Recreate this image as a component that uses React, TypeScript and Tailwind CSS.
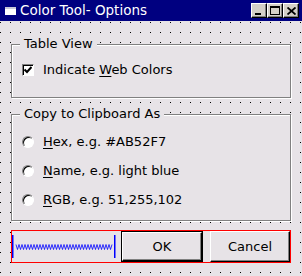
import type { ReactNode } from "react";

const face = "bg-[#e7e3e7]";

function TitleButton({ children }: { children: ReactNode }) {
  return (
    <div className="w-[16px] h-[15px] bg-[#d4d0c8] border-t border-l border-white border-r border-b border-r-black border-b-black shadow-[inset_-1px_-1px_0_#808080] flex items-center justify-center">
      {children}
    </div>
  );
}

function GroupBox({ title, className, children }: { title: string; className: string; children: ReactNode }) {
  return (
    <div
      className={`relative w-[280px] border border-[#808080] shadow-[inset_1px_1px_0_#fff,1px_1px_0_#fff] ${face} ${className}`}
    >
      <span className={`absolute left-[8px] top-[-9px] px-[4px] leading-[15px] ${face}`}>{title}</span>
      {children}
    </div>
  );
}

function Radio({ hot, rest }: { hot: string; rest: string }) {
  return (
    <div className="h-[29px] flex items-center gap-[9px]">
      <div className="w-[12px] h-[12px] rounded-full bg-white border border-t-[#808080] border-l-[#808080] border-r-white border-b-white shadow-[inset_1px_1px_0_#000]" />
      <span>
        <span className="underline underline-offset-2">{hot}</span>
        {rest}
      </span>
    </div>
  );
}

function Spring() {
  const pts: string[] = [];
  for (let i = 0; i <= 64; i++) pts.push(`${4 + i * 1.5},${i % 2 === 0 ? 13.5 : 18.5}`);
  return (
    <svg width="104" height="31" className="shrink-0">
      <rect x="0" y="4" width="1.5" height="23" fill="#0000ff" />
      <rect x="102" y="4" width="1.5" height="23" fill="#0000ff" />
      <polyline points={pts.join(" ")} fill="none" stroke="#0000ff" strokeWidth="0.8" />
    </svg>
  );
}

export default function App() {
  return (
    <div className={`w-[302px] h-[276px] overflow-hidden flex flex-col font-['DejaVu_Sans',sans-serif] text-[13px] text-black ${face}`}>
      <div className="h-[21px] shrink-0 bg-[#000080] flex items-center pl-[5px] pr-[3px]">
        <div className="w-[11px] h-[8px] bg-white border-t-2 border-[#c8c8d8]" />
        <span className="ml-[4px] text-white text-[13.5px] leading-none">Color Tool- Options</span>
        <div className="ml-auto flex">
          <TitleButton>
            <div className="w-[6px] h-[2px] bg-black mt-[7px] mr-[2px]" />
          </TitleButton>
          <TitleButton>
            <div className="w-[10px] h-[9px] border border-black border-t-2" />
          </TitleButton>
          <TitleButton>
            <svg width="9" height="8" viewBox="0 0 9 8">
              <path d="M0.5 0.5 L8.5 7.5 M8.5 0.5 L0.5 7.5" stroke="#000" strokeWidth="1.8" />
            </svg>
          </TitleButton>
        </div>
      </div>

      <div className="relative flex-1">
        <svg className="absolute inset-0 w-full h-full">
          <defs>
            <pattern id="grid" width="10" height="10" y="1" patternUnits="userSpaceOnUse">
              <rect width="1" height="1" fill="#000" />
            </pattern>
          </defs>
          <rect width="100%" height="100%" fill="url(#grid)" />
        </svg>

        <div className="relative flex flex-col pl-[11px] pt-[23px]">
          <GroupBox title="Table View" className="h-[54px] pt-[15px] pl-[10px]">
            <div className="h-[20px] flex items-center gap-[9px]">
              <div className="w-[12px] h-[12px] bg-white border border-t-[#808080] border-l-[#808080] border-r-white border-b-white shadow-[inset_1px_1px_0_#000] flex items-center justify-center">
                <svg width="8" height="8" viewBox="0 0 8 8">
                  <polyline points="0.5,3.5 3,6 7.5,1" fill="none" stroke="#000" strokeWidth="2" />
                </svg>
              </div>
              <span>
                Indicate <span className="underline underline-offset-2">W</span>eb Colors
              </span>
            </div>
          </GroupBox>

          <GroupBox title="Copy to Clipboard As" className="mt-[16px] h-[107px] pt-[12px] pl-[10px]">
            <Radio hot="H" rest="ex, e.g. #AB52F7" />
            <Radio hot="N" rest="ame, e.g. light blue" />
            <Radio hot="R" rest="GB, e.g. 51,255,102" />
          </GroupBox>

          <div className={`mt-[9px] w-[280px] h-[33px] border border-[#ff0000] flex ${face}`}>
            <Spring />
            <div className="ml-[5px] w-[82px] h-[31px] border border-black">
              <div className="w-full h-full bg-[#e7e3e7] border-t border-l border-white border-r border-b border-r-black border-b-black shadow-[inset_-1px_-1px_0_#808080] flex items-center justify-center">
                OK
              </div>
            </div>
            <div className="ml-[7px] w-[80px] h-[31px] bg-[#e7e3e7] border-t border-l border-white border-r border-b border-r-black border-b-black shadow-[inset_-1px_-1px_0_#808080] flex items-center justify-center">
              Cancel
            </div>
          </div>
        </div>
      </div>
    </div>
  );
}
